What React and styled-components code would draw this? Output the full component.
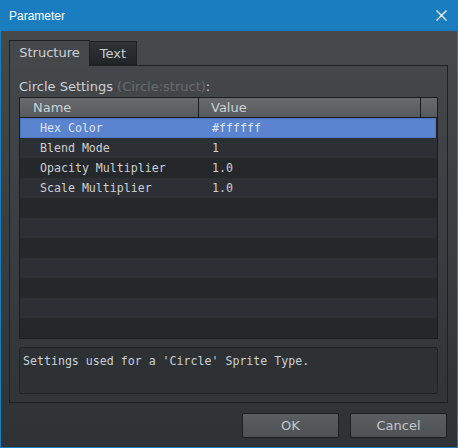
import React from 'react';
import styled, { createGlobalStyle } from 'styled-components';

const GlobalStyle = createGlobalStyle`
  html, body {
    margin: 0;
    padding: 0;
    background: #303336;
  }
`

const Window = styled.div`
  width: 458px;
  height: 448px;
  box-sizing: border-box;
  border: 1px solid #1a7dc0;
  border-top: none;
  display: flex;
  flex-direction: column;
  background: linear-gradient(#484b4e, #2f3235);
  font-family: "DejaVu Sans", sans-serif;
  overflow: hidden;
`

const TitleBar = styled.div`
  height: 31px;
  flex: none;
  margin: 0 -1px;
  padding: 0 11px 0 9px;
  background: #1a7dc0;
  display: flex;
  align-items: center;
  justify-content: space-between;
  color: #ffffff;
  font-family: "Liberation Sans", Arial, sans-serif;
  font-size: 12px;
`

const Body = styled.div`
  flex: 1;
  display: flex;
  flex-direction: column;
  padding: 9px 9px 0 8px;
`

const TabRow = styled.div`
  display: flex;
  align-items: flex-end;
  height: 25px;
`

const Tab = styled.div`
  box-sizing: border-box;
  width: ${p => p.width}px;
  height: ${p => (p.active ? 26 : 24)}px;
  margin-bottom: ${p => (p.active ? -1 : 0)}px;
  border: 1px solid #1e2022;
  border-bottom: ${p => (p.active ? 'none' : '1px solid #1e2022')};
  border-left: ${p => (p.active ? '1px solid #1e2022' : 'none')};
  background: ${p => (p.active ? '#45484b' : 'linear-gradient(#303336, #222528)')};
  color: ${p => (p.active ? '#ccd1d6' : '#c8cdd2')};
  font-size: 13px;
  display: flex;
  align-items: center;
  justify-content: center;
  padding-bottom: ${p => (p.active ? 2 : 0)}px;
  position: relative;
  z-index: 1;
`

const Panel = styled.div`
  box-sizing: border-box;
  height: 338px;
  border: 1px solid #1e2022;
  padding: 12px 9px 8px 9px;
  display: flex;
  flex-direction: column;
`

const Label = styled.div`
  height: 16px;
  margin-bottom: 3px;
  font-size: 13px;
  line-height: 17px;
  color: #ccd1d6;
`

const Muted = styled.span`
  color: #686b6e;
`

const Table = styled.div`
  border: 1px solid #1a1c1e;
  background: #25282b;
  font-family: "DejaVu Sans Mono", monospace;
  font-size: 11.6px;
`

const HeaderRow = styled.div`
  display: grid;
  grid-template-columns: 179px 1fr 16px;
  height: 19px;
  border-bottom: 1px solid #1a1c1e;
  background: linear-gradient(#676b6d, #575b5d);
`

const HeaderCell = styled.div`
  font-family: "DejaVu Sans", sans-serif;
  font-size: 13px;
  color: #ccd1d6;
  padding-left: ${p => p.pad || 0}px;
  line-height: 20px;
  border-right: ${p => (p.last ? 'none' : '1px solid #1a1c1e')};
`

const Row = styled.div`
  display: grid;
  grid-template-columns: 192px 1fr;
  height: 20px;
  align-items: center;
  background: ${p => (p.selected ? '#5a84d0' : p.odd ? '#2c2f33' : '#25282b')};
  box-shadow: ${p => (p.selected ? 'inset 0 0 0 1px #4d76bf' : 'none')};
  color: ${p => (p.selected ? '#dfe6f0' : '#ccd0d4')};
  margin-right: ${p => (p.selected ? 1 : 0)}px;
`

const Cell = styled.div`
  padding-left: ${p => p.pad || 0}px;
  white-space: pre;
`

const Description = styled.div`
  box-sizing: border-box;
  margin-top: 8px;
  height: 47px;
  border: 1px solid #1f2224;
  border-radius: 3px;
  background: #2e3134;
  padding: 6px 3px;
  font-family: "DejaVu Sans Mono", monospace;
  font-size: 11.6px;
  color: #c8d0d8;
`

const Footer = styled.div`
  display: flex;
  justify-content: flex-end;
  gap: 11px;
  padding-top: 10px;
  padding-right: 1px;
`

const Button = styled.button`
  box-sizing: border-box;
  width: 97px;
  height: 25px;
  border: 1px solid #1c1e20;
  border-radius: 2px;
  background: linear-gradient(#5a5e61, #4e5255);
  color: #c3c7ca;
  font-family: "DejaVu Sans", sans-serif;
  font-size: 13px;
  padding: 0;
`

const rows = [
  ['Hex Color', '#ffffff'],
  ['Blend Mode', '1'],
  ['Opacity Multiplier', '1.0'],
  ['Scale Multiplier', '1.0'],
  ['', ''],
  ['', ''],
  ['', ''],
  ['', ''],
  ['', ''],
  ['', ''],
  ['', ''],
];

const CloseIcon = () => (
  <svg width="11" height="11" viewBox="0 0 11 11">
    <path d="M0.5 0.5 L10.5 10.5 M10.5 0.5 L0.5 10.5" stroke="#ffffff" strokeWidth="1.2" />
  </svg>
);

export default function App() {
  return (
    <>
      <GlobalStyle />
      <Window>
        <TitleBar>
          <span>Parameter</span>
          <CloseIcon />
        </TitleBar>
        <Body>
          <TabRow>
            <Tab active width={81}>Structure</Tab>
            <Tab width={47}>Text</Tab>
          </TabRow>
          <Panel>
            <Label>
              Circle Settings <Muted>(Circle:struct)</Muted>:
            </Label>
            <Table>
              <HeaderRow>
                <HeaderCell pad={13}>Name</HeaderCell>
                <HeaderCell pad={12}>Value</HeaderCell>
                <HeaderCell last />
              </HeaderRow>
              {rows.map(([name, value], i) => (
                <Row key={i} selected={i === 0} odd={i % 2 === 1}>
                  <Cell pad={20}>{name}</Cell>
                  <Cell>{value}</Cell>
                </Row>
              ))}
            </Table>
            <Description>Settings used for a 'Circle' Sprite Type.</Description>
          </Panel>
          <Footer>
            <Button>OK</Button>
            <Button>Cancel</Button>
          </Footer>
        </Body>
      </Window>
    </>
  );
}
